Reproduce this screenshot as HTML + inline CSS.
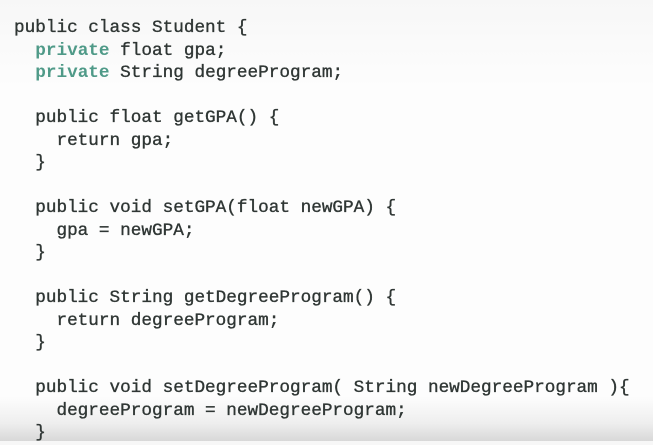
<!DOCTYPE html>
<html><head><meta charset="utf-8"><style>
html,body{margin:0;padding:0;width:653px;height:441px;overflow:hidden;}
body{background:linear-gradient(to bottom,#f7f7f7 0%,#fdfdfd 20%,#fdfdfd 90%,#eeeeee 96%,#d8d8d8 100%);}
pre{position:absolute;left:14px;top:17px;margin:0;font-family:"Liberation Mono",monospace;font-size:17.7px;line-height:22.5px;color:#2f3634;font-weight:normal;-webkit-text-stroke:0.35px #2f3634;}
.k{color:#4f9a88;font-weight:bold;-webkit-text-stroke:0;}
</style></head><body>
<pre>public class Student {
  <span class="k">private</span> float gpa;
  <span class="k">private</span> String degreeProgram;

  public float getGPA() {
    return gpa;
  }

  public void setGPA(float newGPA) {
    gpa = newGPA;
  }

  public String getDegreeProgram() {
    return degreeProgram;
  }

  public void setDegreeProgram( String newDegreeProgram ){
    degreeProgram = newDegreeProgram;
  }</pre>
</body></html>
